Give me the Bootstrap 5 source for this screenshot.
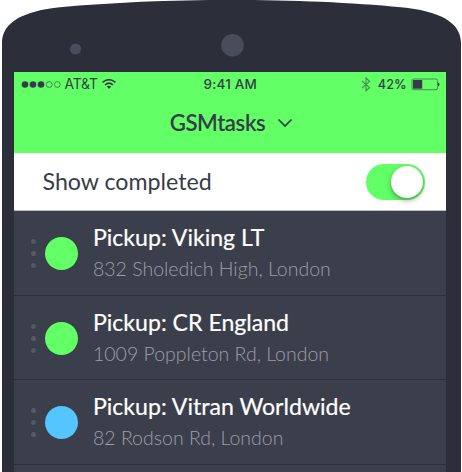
<!DOCTYPE html>
<html lang="en">
<head>
<meta charset="utf-8">
<meta name="viewport" content="width=device-width, initial-scale=1">
<title>GSMtasks</title>
<link href="https://cdn.jsdelivr.net/npm/bootstrap@5.3.0/dist/css/bootstrap.min.css" rel="stylesheet">
<style>
  body { font-family: Lato, sans-serif; color: #363c49; background: #fff; }
  .phone { width: 462px; height: 472px; padding: 72px 16px 0 14px; }
  .phone-shell { z-index: 0; }
  .screen { z-index: 1; height: 400px; background: #3b3f4b; }
  .app-head { height: 81px; background: #62ff66; }
  .status { height: 25px; padding: 0 6.5px 0 7px; font-family: Inter, sans-serif; font-size: 13px; line-height: 25px; }
  .status > * { flex: 1 1 0; }
  .clock { font-weight: 500; font-size: 13.5px; letter-spacing: .15px; }
  .carrier { font-size: 13.8px; letter-spacing: -.1px; margin-left: 2.5px; }
  .percent { font-size: 12.8px; margin-left: 7px; -webkit-text-stroke: .2px; }
  .app-title { height: 52px; font-size: 22.2px; font-weight: 600; line-height: 52px; padding-left: 3px; }
  .app-title span { letter-spacing: -.4px; }
  .chev { margin-left: 12px; }
  .filter { height: 58px; padding: 0 21px 0 28.5px; font-size: 23.2px; border-bottom: 1px solid #b9bdc4; }
  .toggle { width: 59px; height: 36px; padding: 2px; border-radius: 18px; background: #62ff66; }
  .knob { width: 32px; height: 32px; background: #fff; box-shadow: 0 2px 4px rgba(0,0,0,.25), 0 3px 7px rgba(0,0,0,.12); }
  .task { height: 84.5px; padding: 2px 0 0 16.5px; border-bottom: 1px solid #2c2f3a; }
  .grip { width: 5px; gap: 7px; margin-right: 9.7px; }
  .grip i { width: 5px; height: 5px; background: #565a66; }
  .state { width: 33px; height: 33px; margin-right: 14.8px; }
  .done { background: #62ff66; }
  .active-job { background: #54c5ff; }
  .task-copy { padding-bottom: 1.5px; }
  .task-name { font-size: 23.1px; line-height: 31px; color: #fff; -webkit-text-stroke: .2px; }
  .task-place { font-size: 19.5px; line-height: 31px; font-weight: 300; color: #9b9ea9; }
</style>
</head>
<body class="overflow-hidden">
<div class="phone position-relative overflow-hidden">
  <svg class="phone-shell position-absolute top-0 start-0" width="462" height="472" viewBox="0 0 462 472" aria-hidden="true">
    <path d="M2 472V43C2 22 24 11 60 7.300C110 2.500 170 0 231.500 0S353 2.500 401 7.300C439 11 461 22 461 43V472Z" fill="#2c2f3a"/>
    <circle cx="75.500" cy="49" r="5.600" fill="#484c5b"/>
    <circle cx="232.500" cy="45.300" r="11.300" fill="#484c5b"/>
  </svg>
  <main class="screen position-relative overflow-hidden">
    <header class="app-head">
      <div class="status d-flex align-items-center">
        <div class="d-flex align-items-center">
          <svg width="41" height="10" viewBox="0 0 41 10" fill="#363c49" aria-hidden="true">
            <circle cx="4" cy="4.500" r="3.300"/><circle cx="12" cy="4.500" r="3.300"/><circle cx="20" cy="4.500" r="3.300"/>
            <g fill="none" stroke="#363c49" stroke-width=".6"><circle cx="28.200" cy="4.500" r="2.900"/><circle cx="36.300" cy="4.500" r="2.900"/></g>
          </svg>
          <span class="carrier text-nowrap">AT&amp;T</span>
          <svg class="ms-1" width="14" height="12" viewBox="0 0 14 12" fill="none" stroke="#363c49" stroke-width="1.600" aria-hidden="true">
            <path d="M.6 3.400Q7-2 13.400 3.400M3 6Q7 2.400 11 6"/><path d="M4.800 7.600Q7 5.900 9.200 7.600L7 9.900Z" fill="#363c49" stroke="none"/>
          </svg>
        </div>
        <div class="clock text-center">9:41 AM</div>
        <div class="d-flex align-items-center justify-content-end">
          <svg width="10" height="15" viewBox="0 0 10 15" fill="none" stroke="#363c49" stroke-opacity=".6" stroke-width="1.100" aria-hidden="true"><path d="M1 4L8.500 10.700L5 13.700V1L8.500 4.300L1 11"/></svg>
          <span class="percent">42%</span>
          <svg class="ms-1" width="29" height="13" viewBox="0 0 29 13" aria-hidden="true">
            <rect x="1" y="1" width="25.500" height="10.700" rx="1.500" fill="none" stroke="#363c49" stroke-opacity=".6"/>
            <path d="M2 2H11.200V10.700H2Z" fill="#363c49"/><path d="M27 4.500Q28.500 5 28.500 6.400T27 8.300Z" fill="#363c49"/>
          </svg>
        </div>
      </div>
      <div class="app-title d-flex align-items-center justify-content-center">
        <span>GSMtasks</span>
        <svg class="chev" width="16" height="10" viewBox="0 0 16 10" fill="none" stroke="#363c49" stroke-width="1.700" aria-hidden="true"><path d="M1.500 1.500L8 8L14.500 1.500"/></svg>
      </div>
    </header>
    <section class="filter d-flex align-items-center justify-content-between bg-white">
      <span>Show completed</span>
      <div class="toggle d-flex justify-content-end" role="switch" aria-checked="true" aria-label="Show completed"><div class="knob rounded-circle"></div></div>
    </section>
    <section>
      <article class="task d-flex align-items-center">
        <div class="grip d-flex flex-column align-items-center"><i class="rounded-circle"></i><i class="rounded-circle"></i><i class="rounded-circle"></i></div>
        <div class="state done rounded-circle"></div>
        <div class="task-copy text-nowrap"><div class="task-name"><span>Pickup: Viking LT</span></div><div class="task-place"><span>832 Sholedich High, London</span></div></div>
      </article>
      <article class="task d-flex align-items-center">
        <div class="grip d-flex flex-column align-items-center"><i class="rounded-circle"></i><i class="rounded-circle"></i><i class="rounded-circle"></i></div>
        <div class="state done rounded-circle"></div>
        <div class="task-copy text-nowrap"><div class="task-name"><span>Pickup: CR England</span></div><div class="task-place"><span>1009 Poppleton Rd, London</span></div></div>
      </article>
      <article class="task d-flex align-items-center">
        <div class="grip d-flex flex-column align-items-center"><i class="rounded-circle"></i><i class="rounded-circle"></i><i class="rounded-circle"></i></div>
        <div class="state active-job rounded-circle"></div>
        <div class="task-copy text-nowrap"><div class="task-name"><span>Pickup: Vitran Worldwide</span></div><div class="task-place"><span>82 Rodson Rd, London</span></div></div>
      </article>
    </section>
  </main>
</div>
<script src="https://cdn.jsdelivr.net/npm/bootstrap@5.3.0/dist/js/bootstrap.bundle.min.js"></script>
</body>
</html>
